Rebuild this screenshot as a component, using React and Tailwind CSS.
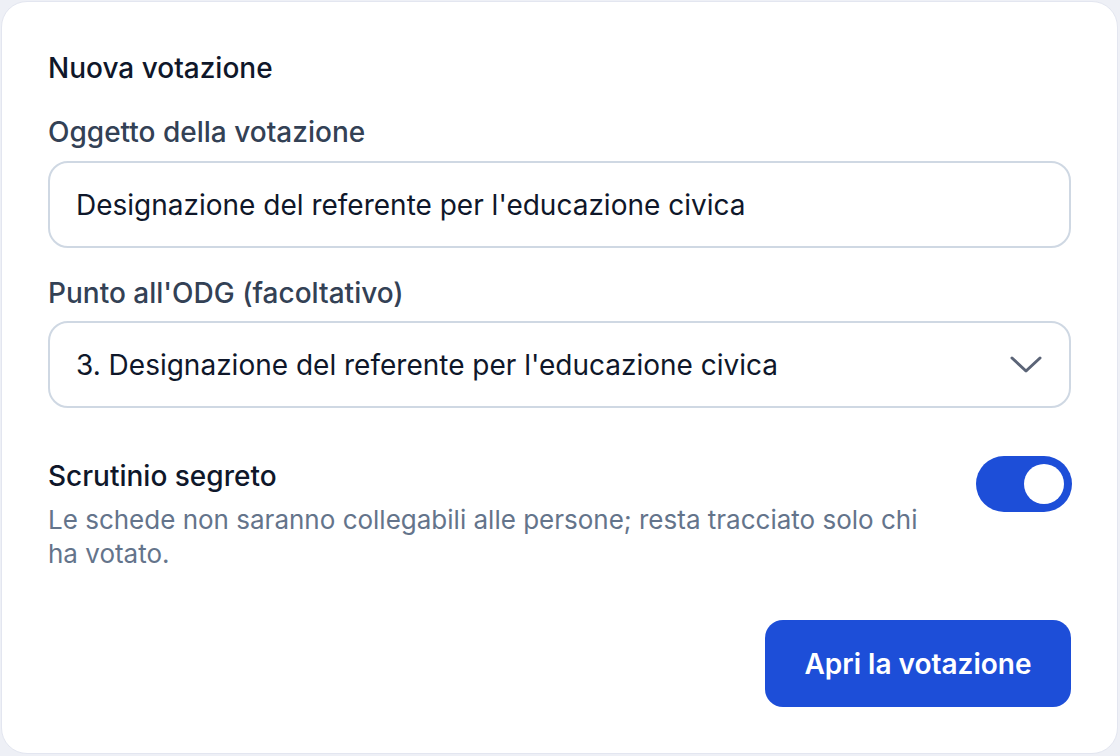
export default function App() {
  const font = { fontFamily: 'Inter, "Noto Sans", sans-serif' };
  return (
    <div className="w-[1120px] h-[756px] bg-[#eef0f6] p-px" style={font}>
      <div className="h-[753px] w-[1117px] rounded-[26px] border border-[#e3e6f0] bg-white px-[46px] pt-[50px]">
        <h2 className="text-[28px] leading-[32px] font-medium text-[#0f172a]">Nuova votazione</h2>

        <label className="mt-[32px] block text-[28px] leading-[32px] font-medium text-[#334155]">
          Oggetto della votazione
        </label>
        <div className="mt-[13px] flex h-[87px] items-center rounded-[20px] border-2 border-[#cfd8e3] px-[26px] text-[28px] text-[#0f172a]">
          Designazione del referente per l'educazione civica
        </div>

        <label className="mt-[29px] block text-[28px] leading-[32px] font-medium text-[#334155]">
          Punto all'ODG (facoltativo)
        </label>
        <div className="mt-[12px] flex h-[87px] items-center justify-between rounded-[20px] border-2 border-[#cfd8e3] pl-[26px] pr-[27px] text-[28px] text-[#0f172a]">
          <span>3. Designazione del referente per l'educazione civica</span>
          <svg width="32" height="18" viewBox="0 0 32 18" fill="none">
            <path d="M2 2 L16 15 L30 2" stroke="#5b6477" strokeWidth="3" strokeLinecap="round" strokeLinejoin="round" />
          </svg>
        </div>

        <div className="mt-[52px] flex items-start justify-between gap-[48px]">
          <div className="flex-1">
            <div className="text-[28px] leading-[32px] font-medium text-[#0f172a]">Scrutinio segreto</div>
            <p className="mt-[11px] text-[26px] leading-[34px] text-[#64748b]">
              Le schede non saranno collegabili alle persone; resta tracciato solo chi ha votato.
            </p>
          </div>
          <div className="mt-[-4px] mr-[-1px] flex h-[56px] w-[96px] shrink-0 items-center justify-end rounded-full bg-[#1d4ed8] pr-[8px]">
            <div className="h-[40px] w-[40px] rounded-full bg-white" />
          </div>
        </div>

        <div className="mt-[49px] flex justify-end">
          <button className="h-[87px] w-[306px] rounded-[18px] bg-[#1d4ed8] text-[28px] font-semibold text-white">
            Apri la votazione
          </button>
        </div>
      </div>
    </div>
  );
}
